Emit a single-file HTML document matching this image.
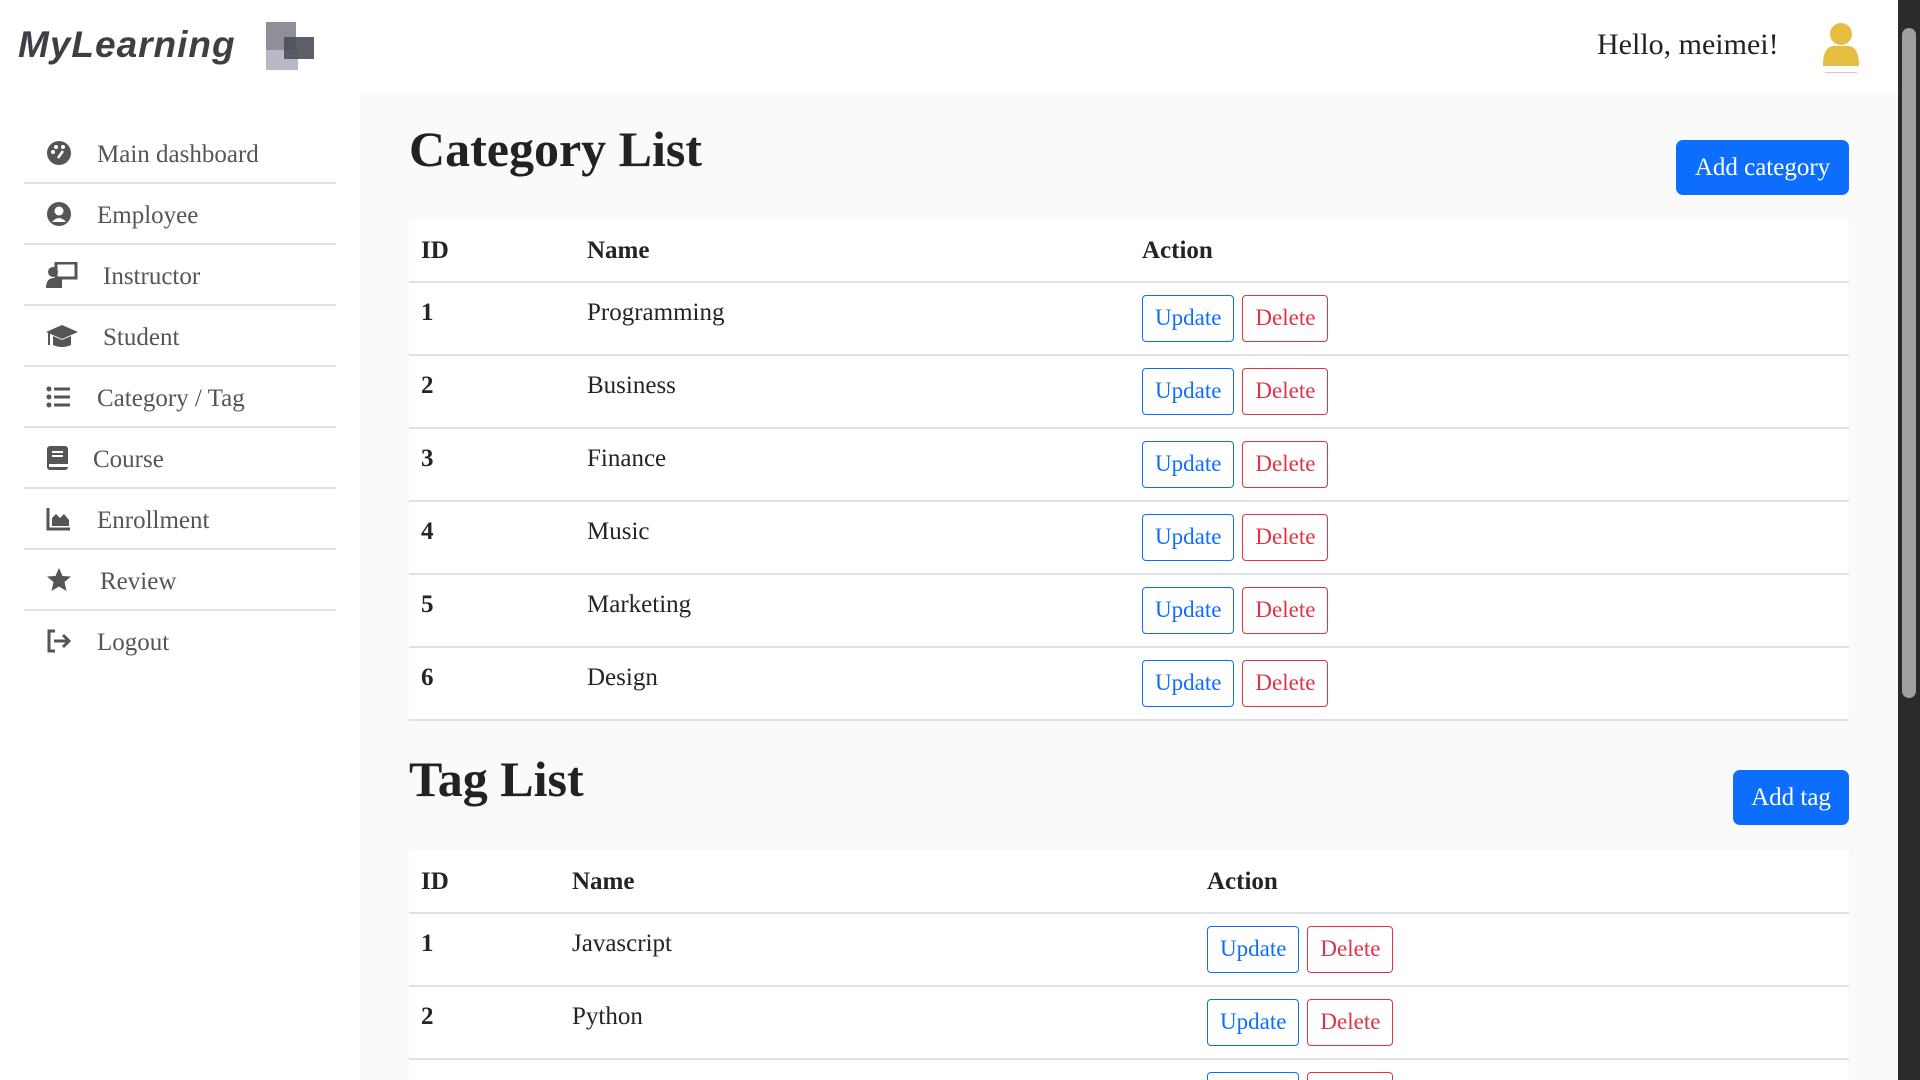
<!DOCTYPE html>
<html style="width:1920px;height:1080px;overflow:hidden"><head><meta charset="utf-8"><style>
*{box-sizing:border-box;margin:0;padding:0}
body{width:1920px;height:1080px;overflow:hidden;font-family:"Liberation Serif",serif;background:#fff;position:relative;color:#212529}
#wrap{position:absolute;left:0;top:0;width:1920px;height:1080px;overflow:hidden}
.hdr{position:absolute;left:0;top:0;width:1898px;height:92px;background:#fff}
.logo{position:absolute;left:18px;top:24px;font-family:"Liberation Sans",sans-serif;font-style:italic;font-weight:bold;font-size:37px;color:#3d3f45;letter-spacing:1px}
.hello{position:absolute;left:1597px;top:28px;font-size:30px;color:#222}
.item{position:absolute;left:24px;width:312px;height:61px;border-bottom:2px solid #e0e1e3;color:#555;font-size:25px}
.item span{position:absolute;top:18px}
.item svg{position:absolute;left:22px;top:17px}
.main{position:absolute;left:360px;top:92px;width:1538px;height:988px;background:#fafafa}
h1{position:absolute;left:409px;font-size:50px;font-weight:bold;color:#222}
.btn{position:absolute;background:#0d6efd;color:#fff;border-radius:7px;font-size:25px;text-align:center;line-height:55px;height:55px}
table{position:absolute;left:409px;width:1440px;background:#fff;border-collapse:collapse;font-size:25px}
th{text-align:left;font-weight:bold;height:62px;padding-left:12px;border-bottom:2px solid #dee2e6}
td{height:73px;padding-left:12px;border-bottom:2px solid #dee2e6;vertical-align:top;padding-top:16px}
.u,.d{display:inline-block;border:1.5px solid;border-radius:4px;height:47px;line-height:44px;padding:0 12px;font-size:23px;margin-top:-4px}
.u{color:#0d6efd;border-color:#0d6efd}.d{color:#dc3545;border-color:#dc3545;margin-left:8px}
.sb{position:absolute;left:1898px;top:0;width:22px;height:1080px;background:#2b2b2b}
.thumb{position:absolute;left:1902px;top:28px;width:14px;height:670px;background:#a0a0a0;border-radius:7px}
</style></head><body><div id="wrap">
<div class="hdr">
<div class="logo">MyLearning</div>
<svg style="position:absolute;left:264px;top:20px" width="56" height="52"><rect x="2" y="2" width="30" height="30" fill="#8e8f99"/><rect x="2" y="30" width="32" height="20" fill="#b9b8c6"/><rect x="20" y="17" width="30" height="22" fill="#4d4f58" opacity=".9"/></svg>
<div class="hello">Hello, meimei!</div>
<svg style="position:absolute;left:1822px;top:22px" width="38" height="52"><circle cx="19" cy="12" r="11" fill="#e6bd43"/><path d="M1 44 Q1 24 12 24 L26 24 Q37 24 37 44 Z" fill="#e6bd43"/><rect x="3" y="50" width="32" height="1" fill="#ccc"/></svg>
</div>
<div class="main"></div>
<div style="position:absolute;left:0;top:123px">
<div class="item" style="top:0"><svg width="26" height="26" viewBox="0 0 26 26"><circle cx="13" cy="13" r="12" fill="#555"/><circle cx="7" cy="12" r="2" fill="#fff"/><circle cx="10" cy="7" r="2" fill="#fff"/><circle cx="17" cy="7" r="2" fill="#fff"/><path d="M12 18 L17 11" stroke="#fff" stroke-width="2.5"/></svg><span style="left:73px">Main dashboard</span></div>
<div class="item" style="top:61px"><svg width="26" height="26"><circle cx="13" cy="13" r="12" fill="#555"/><circle cx="13" cy="10" r="4.5" fill="#fff"/><path d="M6 21 Q13 13 20 21" fill="#fff"/></svg><span style="left:73px">Employee</span></div>
<div class="item" style="top:122px"><svg width="32" height="26"><rect x="10" y="1" width="20" height="15" fill="none" stroke="#555" stroke-width="3"/><circle cx="7" cy="10" r="5" fill="#555"/><path d="M0 26 Q0 16 8 16 L16 16 L16 26Z" fill="#555"/></svg><span style="left:79px">Instructor</span></div>
<div class="item" style="top:183px"><svg width="32" height="26"><path d="M0 9 L16 2 L32 9 L16 16Z" fill="#555"/><path d="M7 13 L7 22 Q16 26 25 22 L25 13 L16 17Z" fill="#555"/><path d="M3 10 L3 22" stroke="#555" stroke-width="2"/></svg><span style="left:79px">Student</span></div>
<div class="item" style="top:244px"><svg width="26" height="26"><g fill="#555"><circle cx="3" cy="5" r="2.5"/><circle cx="3" cy="13" r="2.5"/><circle cx="3" cy="21" r="2.5"/><rect x="8" y="3.5" width="16" height="3"/><rect x="8" y="11.5" width="16" height="3"/><rect x="8" y="19.5" width="16" height="3"/></g></svg><span style="left:73px">Category / Tag</span></div>
<div class="item" style="top:305px"><svg width="26" height="26"><rect x="1" y="1" width="21" height="24" rx="3" fill="#555"/><rect x="6" y="6" width="11" height="2" fill="#fff"/><rect x="6" y="10" width="11" height="2" fill="#fff"/><rect x="3" y="19" width="19" height="3" fill="#fff"/></svg><span style="left:69px">Course</span></div>
<div class="item" style="top:366px"><svg width="26" height="26"><path d="M2 2 L2 23 L24 23" stroke="#555" stroke-width="3" fill="none"/><path d="M6 20 L6 12 L10 8 L14 12 L18 8 L23 14 L23 20Z" fill="#555"/></svg><span style="left:73px">Enrollment</span></div>
<div class="item" style="top:427px"><svg width="26" height="26"><path d="M13 1 L16.5 9 L25 9.5 L18.5 15 L20.5 24 L13 19.5 L5.5 24 L7.5 15 L1 9.5 L9.5 9Z" fill="#555"/></svg><span style="left:76px">Review</span></div>
<div class="item" style="top:488px;border:none"><svg width="26" height="26"><path d="M9 3 L3 3 L3 23 L9 23" stroke="#555" stroke-width="3" fill="none"/><path d="M8 13 L23 13 M17 7 L23 13 L17 19" stroke="#555" stroke-width="3" fill="none"/></svg><span style="left:73px">Logout</span></div>
</div>
<h1 style="top:120px">Category List</h1>
<div class="btn" style="left:1676px;top:140px;width:173px">Add category</div>
<table style="top:220px">
<tr><th style="width:166px">ID</th><th style="width:555px">Name</th><th>Action</th></tr>
<tr><td><b>1</b></td><td>Programming</td><td><span class="u">Update</span><span class="d">Delete</span></td></tr>
<tr><td><b>2</b></td><td>Business</td><td><span class="u">Update</span><span class="d">Delete</span></td></tr>
<tr><td><b>3</b></td><td>Finance</td><td><span class="u">Update</span><span class="d">Delete</span></td></tr>
<tr><td><b>4</b></td><td>Music</td><td><span class="u">Update</span><span class="d">Delete</span></td></tr>
<tr><td><b>5</b></td><td>Marketing</td><td><span class="u">Update</span><span class="d">Delete</span></td></tr>
<tr><td><b>6</b></td><td>Design</td><td><span class="u">Update</span><span class="d">Delete</span></td></tr>
</table>
<h1 style="top:750px">Tag List</h1>
<div class="btn" style="left:1733px;top:770px;width:116px">Add tag</div>
<table style="top:851px">
<tr><th style="width:151px">ID</th><th style="width:635px">Name</th><th>Action</th></tr>
<tr><td><b>1</b></td><td>Javascript</td><td><span class="u">Update</span><span class="d">Delete</span></td></tr>
<tr><td><b>2</b></td><td>Python</td><td><span class="u">Update</span><span class="d">Delete</span></td></tr>
<tr><td><b>3</b></td><td>Java</td><td><span class="u">Update</span><span class="d">Delete</span></td></tr>
</table>
<div class="sb"></div><div class="thumb"></div>
</div></body></html>
